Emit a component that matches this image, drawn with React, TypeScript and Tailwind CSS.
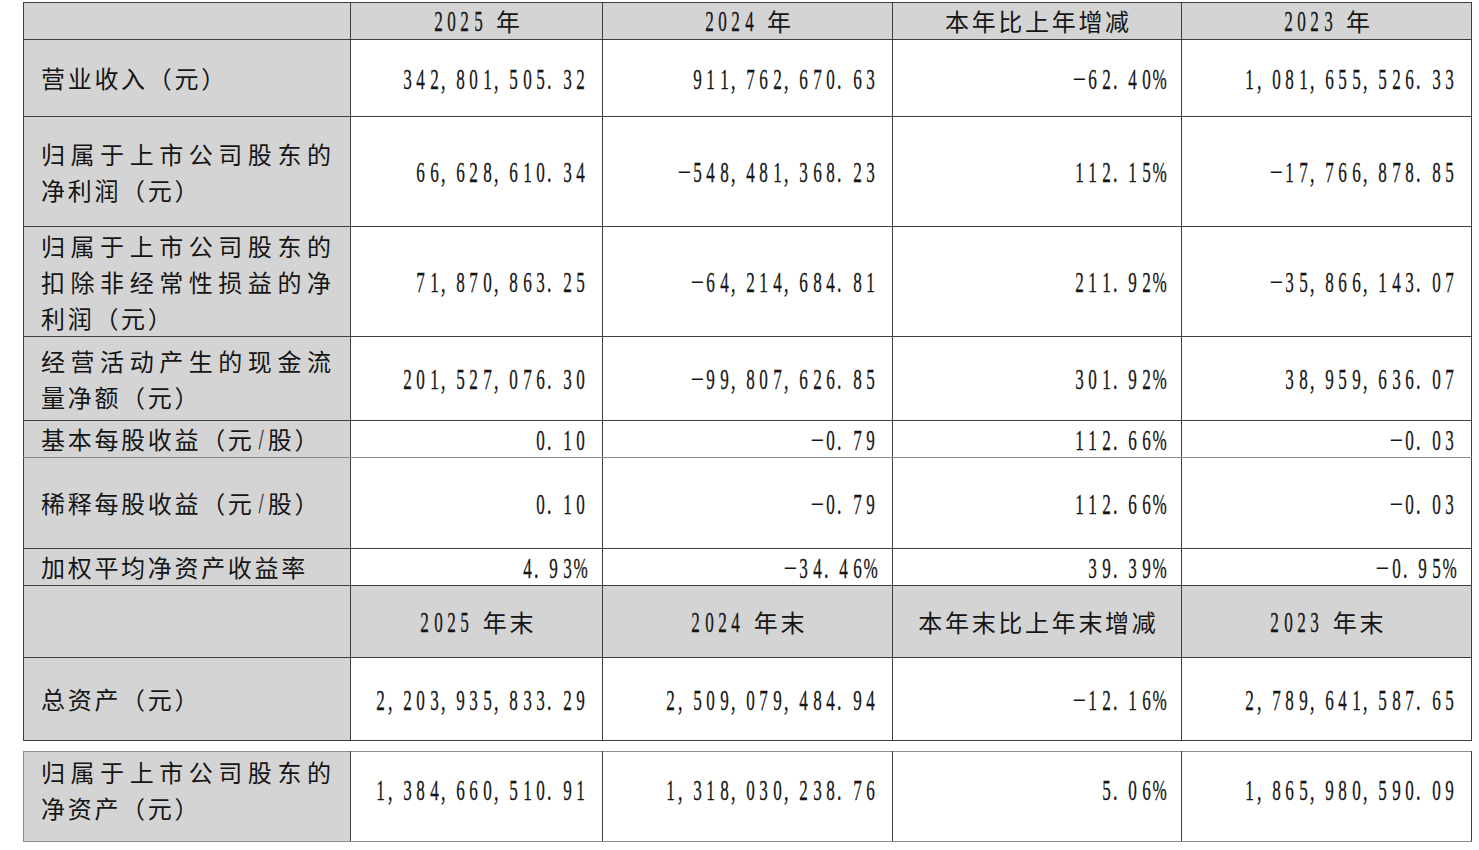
const rows: { label: string[]; vals: string[]; h: string; lightBottom?: boolean }[] = [
  { label: ["营业收入（元）"], vals: ["342,801,505.32", "911,762,670.63", "−62.40%", "1,081,655,526.33"], h: "h-[77px]" },
  { label: ["归属于上市公司股东的", "净利润（元）"], vals: ["66,628,610.34", "−548,481,368.23", "112.15%", "−17,766,878.85"], h: "h-[110px]" },
  { label: ["归属于上市公司股东的", "扣除非经常性损益的净", "利润（元）"], vals: ["71,870,863.25", "−64,214,684.81", "211.92%", "−35,866,143.07"], h: "h-[110px]" },
  { label: ["经营活动产生的现金流", "量净额（元）"], vals: ["201,527,076.30", "−99,807,626.85", "301.92%", "38,959,636.07"], h: "h-[84px]" },
  { label: ["基本每股收益（元/股）"], vals: ["0.10", "−0.79", "112.66%", "−0.03"], h: "h-[37px]", lightBottom: true },
  { label: ["稀释每股收益（元/股）"], vals: ["0.10", "−0.79", "112.66%", "−0.03"], h: "h-[91px]" },
  { label: ["加权平均净资产收益率"], vals: ["4.93%", "−34.46%", "39.39%", "−0.95%"], h: "h-[37px]" },
];

// one glyph cell: ascii is half width and condensed, cjk full width
function Ch({ c }: { c: string }) {
  if (c.charCodeAt(0) < 128 || c === "−") {
    if (c === "," || c === ".") {
      return (
        <span className="inline-flex w-[13.3px] justify-start">
          <span className="inline-block origin-left scale-x-[0.6] font-['Liberation_Serif',serif] text-[30px] leading-[24px] [-webkit-text-stroke:0.3px]">{c}</span>
        </span>
      );
    }
    if (c === "−") {
      return (
        <span className="inline-flex w-[13.3px] justify-center">
          <span className="inline-block scale-x-[0.8] font-['Liberation_Serif',serif] text-[30px] leading-[24px]">{c}</span>
        </span>
      );
    }
    if (c === " ") {
      return <span className="inline-block w-[10px]" />;
    }
    return (
      <span className="inline-flex w-[13.3px] justify-center">
        <span className="inline-block scale-x-[0.57] font-['Liberation_Serif',serif] text-[30px] leading-[24px] [-webkit-text-stroke:0.3px]">{c}</span>
      </span>
    );
  }
  return <span className="inline-block w-[26.7px] text-[24px] leading-[24px]">{c}</span>;
}

function Text({ s }: { s: string }) {
  return (
    <span className="inline-block whitespace-nowrap leading-[24px]">
      {Array.from(s).map((c, i) => (
        <Ch key={i} c={c} />
      ))}
    </span>
  );
}

function Label({ lines }: { lines: string[] }) {
  return (
    <div>
      {lines.map((l, i) =>
        i < lines.length - 1 ? (
          <div key={i} className="flex h-[36px] items-center justify-between">
            {Array.from(l).map((c, j) => (
              <span key={j} className="inline-block text-[24px] leading-[24px]">{c}</span>
            ))}
          </div>
        ) : (
          <div key={i} className="flex h-[36px] items-center">
            <Text s={l} />
          </div>
        )
      )}
    </div>
  );
}

function Cols() {
  return (
    <colgroup>
      <col className="w-[327px]" />
      <col className="w-[252px]" />
      <col className="w-[290px]" />
      <col className="w-[289px]" />
      <col className="w-[290px]" />
    </colgroup>
  );
}

const labelTd = "border border-[#3f3f3f] bg-[#d4d4d4] p-0 pl-[17px] pr-[19px] align-middle";
const labelTdLight = "border border-[#3f3f3f] border-b-[#8c8c8c] bg-[#d4d4d4] p-0 pl-[17px] pr-[19px] align-middle";
const numTd = "border border-[#3f3f3f] p-0 pr-[15px] pt-[1px] text-right align-middle leading-[24px]";
const numTdLight = "border border-[#3f3f3f] border-b-[#8c8c8c] p-0 pr-[15px] pt-[1px] text-right align-middle leading-[24px]";
const headTd = "border border-[#3f3f3f] bg-[#d4d4d4] p-0 text-center align-middle leading-[24px]";

function HeadRow({ cells, h }: { cells: string[]; h: string }) {
  return (
    <tr className={h}>
      <td className={headTd} />
      {cells.map((c) => (
        <td key={c} className={headTd}>
          <Text s={c} />
        </td>
      ))}
    </tr>
  );
}

function DataRow({ label, vals, h, lightBottom }: { label: string[]; vals: string[]; h: string; lightBottom?: boolean }) {
  return (
    <tr className={h}>
      <td className={lightBottom ? labelTdLight : labelTd}>
        <Label lines={label} />
      </td>
      {vals.map((v, i) => (
        <td key={i} className={lightBottom ? numTdLight : numTd}>
          <Text s={v} />
        </td>
      ))}
    </tr>
  );
}

export default function App() {
  return (
    <div className="min-h-[850px] w-[1479px] bg-white pl-[23px] pt-[2px] font-['Noto_Sans_CJK_SC','Liberation_Serif',sans-serif] text-[24px] leading-[24px] text-[#151515]">
      <table className="w-[1448px] table-fixed border-collapse">
        <Cols />
        <tbody>
          <HeadRow cells={["2025 年", "2024 年", "本年比上年增减", "2023 年"]} h="h-[37px]" />
          {rows.map((r, i) => (
            <DataRow key={i} {...r} />
          ))}
          <HeadRow cells={["2025 年末", "2024 年末", "本年末比上年末增减", "2023 年末"]} h="h-[72px]" />
          <DataRow
            label={["总资产（元）"]}
            vals={["2,203,935,833.29", "2,509,079,484.94", "−12.16%", "2,789,641,587.65"]}
            h="h-[83px]"
          />
        </tbody>
      </table>
      <table className="mt-[10px] w-[1448px] table-fixed border-collapse">
        <Cols />
        <tbody>
          <tr className="h-[90px]">
            <td className="border border-[#8c8c8c] border-r-[#3f3f3f] bg-[#d4d4d4] p-0 pb-[14px] pl-[17px] pr-[19px] align-middle">
              <Label lines={["归属于上市公司股东的", "净资产（元）"]} />
            </td>
            {["1,384,660,510.91", "1,318,030,238.76", "5.06%", "1,865,980,590.09"].map((v, i) => (
              <td key={i} className="border border-[#3f3f3f] border-t-[#8c8c8c] border-b-[#8c8c8c] p-0 pb-[14px] pr-[15px] text-right align-middle leading-[24px]">
                <Text s={v} />
              </td>
            ))}
          </tr>
        </tbody>
      </table>
    </div>
  );
}
